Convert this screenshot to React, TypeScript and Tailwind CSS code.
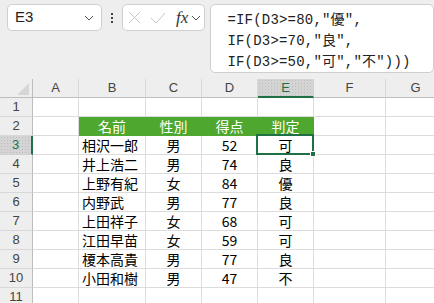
import React from "react";

const COLS = ["A", "B", "C", "D", "E", "F", "G"];
const WIDTHS = ["w-[46px]", "w-[67px]", "w-[56px]", "w-[56px]", "w-[56px]", "w-[72px]", "w-[60px]"];

// rows 1..11, each array is cells A..G
const ROWS: string[][] = [
  ["", "", "", "", "", "", ""],
  ["", "名前", "性別", "得点", "判定", "", ""],
  ["", "相沢一郎", "男", "52", "可", "", ""],
  ["", "井上浩二", "男", "74", "良", "", ""],
  ["", "上野有紀", "女", "84", "優", "", ""],
  ["", "内野武", "男", "77", "良", "", ""],
  ["", "上田祥子", "女", "68", "可", "", ""],
  ["", "江田早苗", "女", "59", "可", "", ""],
  ["", "榎本高貴", "男", "77", "良", "", ""],
  ["", "小田和樹", "男", "47", "不", "", ""],
  ["", "", "", "", "", "", ""],
];

const dots = "bg-[#d4d4d4] bg-[radial-gradient(#bdbdbd_0.7px,transparent_0.8px)] bg-[length:3px_3px]";

function Chevron({ className }: { className?: string }) {
  return (
    <svg width="10" height="6" viewBox="0 0 10 6" className={className}>
      <path d="M1 1l4 4 4-4" fill="none" stroke="#555" strokeWidth="1" />
    </svg>
  );
}

function Cell({ row, col, value }: { row: number; col: number; value: string }) {
  const header = row === 2 && col >= 1 && col <= 4;
  const selected = row === 3 && col === 4;
  const align = col === 1 && !header ? "justify-start pl-[3px]" : "justify-center";
  return (
    <div
      className={`relative ${WIDTHS[col]} h-[19px] shrink-0 flex items-center ${align} border-r border-b ${
        header ? "bg-[#4ea72e] text-white border-[#4ea72e]" : "bg-white text-black border-[#dcdcdc]"
      }`}
    >
      {value}
      {selected && (
        <div className="absolute z-10 -left-[2px] -top-[2px] w-[58px] h-[21px] border-2 border-[#1e7145]">
          <div className="absolute -right-[4px] -bottom-[4px] w-[6px] h-[6px] bg-[#1e7145] border border-white" />
        </div>
      )}
    </div>
  );
}

export default function App() {
  return (
    <div className="w-[434px] h-[303px] overflow-hidden bg-[#eeeeee] font-['Noto_Sans_CJK_JP',sans-serif]">
      {/* formula bar */}
      <div className="flex items-start h-[79px] pt-[4px]">
        <div className="ml-[7px] w-[101px] h-[27px] bg-white border border-[#cfcfcf] rounded-[5px] flex items-center justify-between pl-[7px] pr-[7px]">
          <span className="text-[15px] text-[#222] font-['Liberation_Sans',sans-serif]">E3</span>
          <Chevron />
        </div>
        <div className="w-[22px] h-[27px] flex flex-col items-center justify-center gap-[2px]">
          <div className="w-[2px] h-[2px] bg-[#444]" />
          <div className="w-[2px] h-[2px] bg-[#444]" />
          <div className="w-[2px] h-[2px] bg-[#444]" />
        </div>
        <div className="w-[84px] h-[27px] bg-white border border-[#cfcfcf] rounded-[5px] flex items-center pl-[5px] pr-[3px]">
          <svg width="13" height="13" viewBox="0 0 13 13">
            <path d="M1 1l11 11M12 1L1 12" stroke="#c4c4c4" strokeWidth="1" fill="none" />
          </svg>
          <svg width="16" height="12" viewBox="0 0 16 12" className="ml-[9px]">
            <path d="M1 6l5 5 9-10" stroke="#c4c4c4" strokeWidth="1" fill="none" />
          </svg>
          <span className="ml-[10px] text-[17px] leading-none italic text-[#333] font-['Liberation_Serif',serif]">fx</span>
          <Chevron className="ml-[3px]" />
        </div>
        <div className="ml-[5px] w-[240px] h-[69px] bg-white border border-[#cfcfcf] rounded-[5px] pl-[16px] pt-[5px] text-[14px] leading-[21px] tracking-[0.2px] text-[#222] font-['Liberation_Mono','Noto_Sans_CJK_JP',monospace] whitespace-pre">
          <div>=IF(D3&gt;=80,"優",</div>
          <div>IF(D3&gt;=70,"良",</div>
          <div>IF(D3&gt;=50,"可","不")))</div>
        </div>
      </div>

      {/* column headers */}
      <div className="flex text-[13px] text-[#444] font-['Liberation_Sans',sans-serif]">
        <div className="w-[33px] h-[19px] shrink-0 border-r border-b border-[#bdbdbd] flex items-end justify-end pr-[3px] pb-[2px]">
          <svg width="12" height="12" viewBox="0 0 12 12">
            <path d="M12 0V12H0z" fill="#d6d6d6" />
          </svg>
        </div>
        {COLS.map((c, i) =>
          i === 4 ? (
            <div
              key={c}
              className={`${WIDTHS[i]} h-[19px] shrink-0 flex items-center justify-center border-r border-[#d0d0d0] border-b-2 border-b-[#1e7145] text-[#1e7145] ${dots}`}
            >
              {c}
            </div>
          ) : (
            <div
              key={c}
              className={`${WIDTHS[i]} h-[19px] shrink-0 flex items-center justify-center border-r border-[#d8d8d8] border-b border-b-[#bdbdbd]`}
            >
              {c}
            </div>
          )
        )}
      </div>

      {/* sheet rows */}
      {ROWS.map((cells, r) => {
        const row = r + 1;
        return (
          <div key={row} className="flex text-[14px]">
            <div
              className={`w-[33px] h-[19px] shrink-0 flex items-center justify-center border-b text-[13px] font-['Liberation_Sans',sans-serif] ${
                row === 3
                  ? `border-r-2 border-r-[#1e7145] border-b-[#d0d0d0] text-[#1e7145] ${dots}`
                  : "border-r border-r-[#bdbdbd] border-b-[#d8d8d8] text-[#444]"
              }`}
            >
              {row}
            </div>
            {cells.map((v, c) => (
              <Cell key={c} row={row} col={c} value={v} />
            ))}
          </div>
        );
      })}
    </div>
  );
}
